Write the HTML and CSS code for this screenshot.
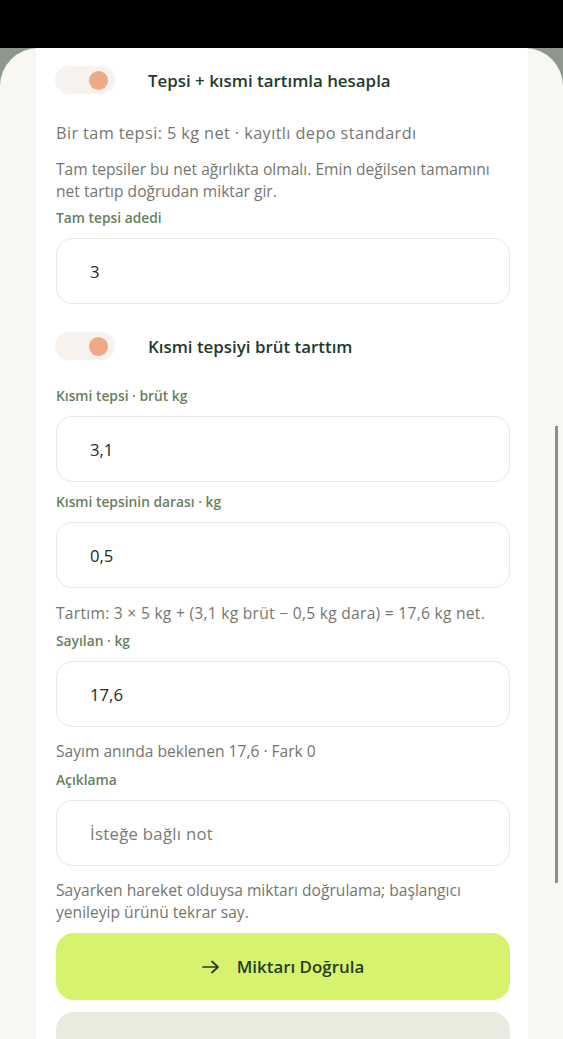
FILE: index.html
```html
<!DOCTYPE html>
<html lang="tr">
<head>
<meta charset="utf-8">
<title>Sayım</title>
<link rel="stylesheet" href="styles.css">
</head>
<body>
<div class="topbar"></div>
<div class="backdrop">
  <div class="sheet">
    <div class="panel">
      <div class="toggle-row">
        <div class="switch"><span class="knob"></span></div>
        <span class="toggle-label">Tepsi + kısmi tartımla hesapla</span>
      </div>
      <p class="hint hint-wide gap-28">Bir tam tepsi: 5 kg net · kayıtlı depo standardı</p>
      <p class="hint gap-14">Tam tepsiler bu net ağırlıkta olmalı. Emin değilsen tamamını net tartıp doğrudan miktar gir.</p>
      <label class="field gap-6">
        <span class="field-label">Tam tepsi adedi</span>
        <input class="input" type="text" value="3">
      </label>
      <div class="toggle-row gap-28">
        <div class="switch"><span class="knob"></span></div>
        <span class="toggle-label">Kısmi tepsiyi brüt tarttım</span>
      </div>
      <label class="field gap-26">
        <span class="field-label">Kısmi tepsi · brüt kg</span>
        <input class="input" type="text" value="3,1">
      </label>
      <label class="field gap-10">
        <span class="field-label">Kısmi tepsinin darası · kg</span>
        <input class="input" type="text" value="0,5">
      </label>
      <p class="hint hint-calc gap-14">Tartım: 3 × 5 kg + (3,1 kg brüt − 0,5 kg dara) = 17,6 kg net.</p>
      <label class="field gap-7">
        <span class="field-label">Sayılan · kg</span>
        <input class="input" type="text" value="17,6">
      </label>
      <p class="hint gap-13">Sayım anında beklenen 17,6 · Fark 0</p>
      <label class="field gap-8">
        <span class="field-label">Açıklama</span>
        <input class="input" type="text" placeholder="İsteğe bağlı not">
      </label>
      <p class="hint gap-13">Sayarken hareket olduysa miktarı doğrulama; başlangıcı yenileyip ürünü tekrar say.</p>
      <button class="btn btn-primary gap-10" type="button">
        <svg class="arrow" viewBox="0 0 18 14" width="18" height="14"><path d="M1 7h15M10 1.5 16 7l-6 5.5" fill="none" stroke="currentColor" stroke-width="1.7" stroke-linecap="round" stroke-linejoin="round"/></svg>
        <span>Miktarı Doğrula</span>
      </button>
      <button class="btn btn-secondary gap-12" type="button">
        <svg class="arrow" viewBox="0 0 18 14" width="18" height="14"><path d="M1 7h15M10 1.5 16 7l-6 5.5" fill="none" stroke="currentColor" stroke-width="1.7" stroke-linecap="round" stroke-linejoin="round"/></svg>
        <span>Bakiyeyi Yenile</span>
      </button>
    </div>
  </div>
  <div class="scrollbar"></div>
</div>
</body>
</html>
```
FILE: styles.css
```css
* { box-sizing: border-box; }
html, body {
  margin: 0;
  padding: 0;
  width: 563px;
  height: 1039px;
  overflow: hidden;
  background: #000;
  font-family: "Open Sans", "Noto Sans", sans-serif;
}
body {
  display: flex;
  flex-direction: column;
}
.topbar {
  height: 48px;
  flex: none;
  background: #000;
}
.backdrop {
  position: relative;
  flex: 1;
  background: #8e978b;
  display: flex;
  flex-direction: column;
  overflow: hidden;
}
.sheet {
  flex: 1;
  background: #f8f8f3;
  border-radius: 38px 38px 0 0;
  padding: 0 35px 0 36px;
  overflow: hidden;
}
.panel {
  background: #fff;
  padding: 18px 18px 0 20px;
  display: flex;
  flex-direction: column;
  min-height: 100%;
}
.toggle-row {
  display: flex;
  align-items: center;
  gap: 33px;
  height: 28px;
  margin-left: -1px;
}
.switch {
  width: 60px;
  height: 28px;
  border-radius: 14px;
  background: #f7f2ee;
  display: flex;
  align-items: center;
  justify-content: flex-end;
  padding-right: 7px;
  flex: none;
}
.knob {
  width: 19px;
  height: 19px;
  border-radius: 50%;
  background: #eeaa87;
}
.toggle-label {
  font-size: 16.9px;
  font-weight: 600;
  color: #1d3a2b;
}
.hint {
  margin: 0;
  font-size: 15.6px;
  line-height: 22px;
  color: #76766f;
}
.hint-wide {
  font-size: 16.3px;
  letter-spacing: 0.4px;
}
.hint-calc {
  letter-spacing: 0.27px;
}
.field {
  display: flex;
  flex-direction: column;
  gap: 10px;
}
.field-label {
  font-size: 13.8px;
  line-height: 20px;
  font-weight: 600;
  color: #687f5e;
}
.input {
  height: 66px;
  width: 100%;
  border: 1.5px solid #e7e9dc;
  border-radius: 16px;
  background: #fff;
  padding: 0 20px 0 33px;
  font-family: inherit;
  font-size: 16.7px;
  color: #1f2b23;
  outline: none;
}
.input::placeholder {
  color: #7a7a73;
  opacity: 1;
  letter-spacing: 0.3px;
}
.btn {
  flex: none;
  height: 67px;
  width: 100%;
  border: none;
  border-radius: 18px;
  display: flex;
  align-items: center;
  justify-content: center;
  gap: 17px;
  font-family: inherit;
  font-size: 16.9px;
  font-weight: 600;
  color: #1f3d27;
  padding: 0;
}
.btn-primary { background: #d7f26c; }
.btn-secondary { background: #e8ecdf; color: #31463a; }
.arrow { flex: none; }
.scrollbar {
  position: absolute;
  right: 5px;
  top: 378px;
  width: 3px;
  height: 457px;
  background: #8e8f88;
}
.gap-6 { margin-top: 6px; }
.gap-7 { margin-top: 7px; }
.gap-8 { margin-top: 8px; }
.gap-10 { margin-top: 10px; }
.gap-12 { margin-top: 12px; }
.gap-13 { margin-top: 13px; }
.gap-14 { margin-top: 14px; }
.gap-26 { margin-top: 26px; }
.gap-28 { margin-top: 28px; }
```
